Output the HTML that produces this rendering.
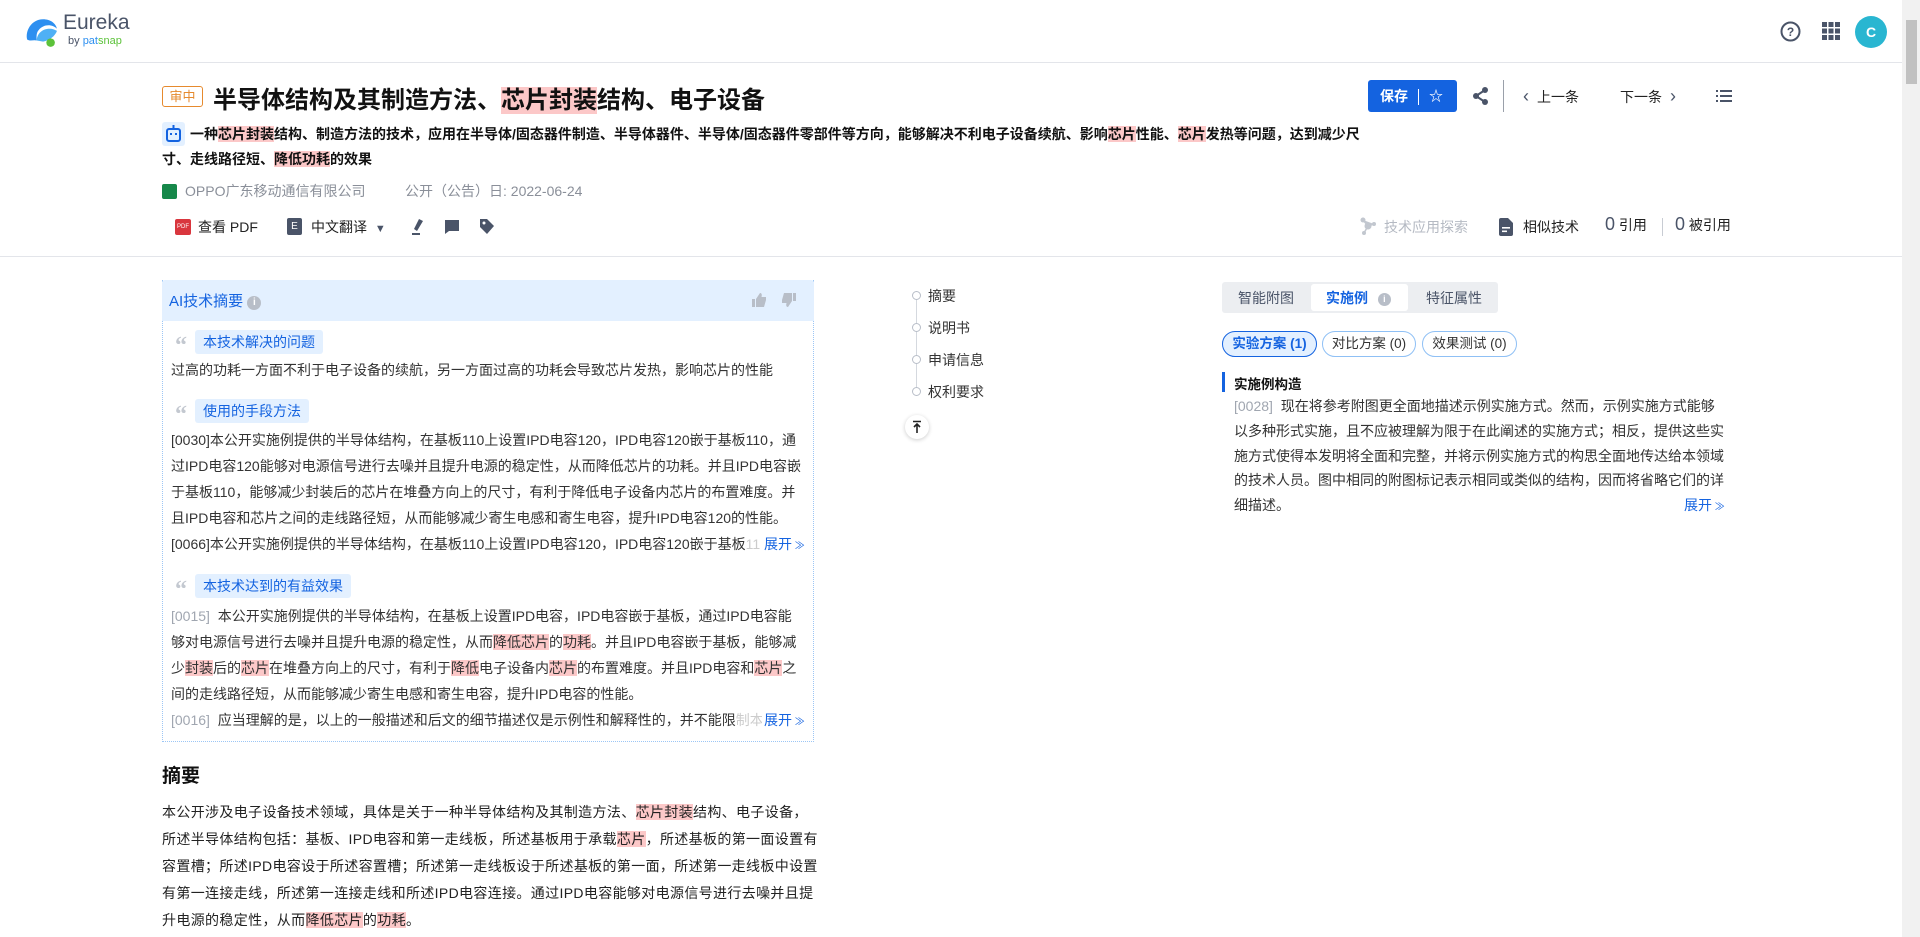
<!DOCTYPE html>
<html><head><meta charset="utf-8">
<style>
*{margin:0;padding:0;box-sizing:border-box}
body{width:1920px;height:937px;overflow:hidden;background:#fff;font-family:"Liberation Sans","Noto Sans CJK SC",sans-serif;color:#222;position:relative}
.a{position:absolute;white-space:nowrap}
.hl{background:#fcc8c8}
.hdr{position:absolute;left:0;top:0;width:1902px;height:63px;border-bottom:1px solid #e3e5ea}
.sb{position:absolute;right:0;top:0;width:18px;height:937px;background:#f1f1f1}
.sb div{position:absolute;left:4px;top:20px;width:11px;height:64px;background:#c1c1c1}
.gray{color:#8a8f99}
.ptxt{font-size:14px;line-height:26px;color:#333}
.tag{display:inline-block;background:#e3f0ff;color:#1463e0;font-size:14px;padding:2px 8px;border-radius:3px}
.q{display:inline-block;color:#c3c8d0;font-weight:bold;font-size:24px;line-height:14px;height:14px;vertical-align:-6px;margin-right:8px;font-family:"Liberation Serif",serif}
.num{color:#a0a6b0}
.more{color:#1463e0}
</style></head><body>
<div class="hdr"></div>
<div class="sb"><div></div></div>
<!-- logo -->
<svg class="a" style="left:23px;top:16px" width="36" height="32" viewBox="0 0 32 30"><path d="M3 22C1 14 7 3 18 3c7 0 12 4 13 9-5-5-13-4-17 1-3 3-2 8-2 10-3-1-6 1-9-1z" fill="#2d8ff0"/><path d="M12 23c0-6 5-11 12-11 3 0 5 1 7 2-2 5-7 9-13 10z" fill="#4fb0f5"/><circle cx="25" cy="25" r="4" fill="#5cc23a"/></svg>
<div class="a" style="left:63px;top:11px;font-size:21px;color:#4a5468">Eureka</div>
<div class="a" style="left:68px;top:35px;font-size:11px;color:#4a5468">by <span style="color:#2d8ff0">pat</span><span style="color:#5cc23a">snap</span></div>
<!-- header right -->
<svg class="a" style="left:1780px;top:21px" width="21" height="21" viewBox="0 0 21 21"><circle cx="10.5" cy="10.5" r="9" fill="none" stroke="#4a5468" stroke-width="2"/><text x="10.5" y="15" text-anchor="middle" font-size="12" font-weight="bold" fill="#4a5468" font-family="Liberation Sans">?</text></svg>
<svg class="a" style="left:1822px;top:22px" width="18" height="18" viewBox="0 0 18 18" fill="#4a5468"><rect x="0" y="0" width="5" height="5"/><rect x="6.5" y="0" width="5" height="5"/><rect x="13" y="0" width="5" height="5"/><rect x="0" y="6.5" width="5" height="5"/><rect x="6.5" y="6.5" width="5" height="5"/><rect x="13" y="6.5" width="5" height="5"/><rect x="0" y="13" width="5" height="5"/><rect x="6.5" y="13" width="5" height="5"/><rect x="13" y="13" width="5" height="5"/></svg>
<div class="a" style="left:1855px;top:16px;width:32px;height:32px;border-radius:50%;background:#29b6d1;color:#fff;font-size:14px;font-weight:bold;text-align:center;line-height:32px">C</div>

<!-- title -->
<div class="a" style="left:162px;top:86px;width:41px;height:21px;border:1px solid #e68a2e;border-radius:3px;color:#e68a2e;font-size:13px;text-align:center;line-height:19px">审中</div>
<div class="a" style="left:213px;top:80px;font-size:24px;font-weight:bold;color:#111">半导体结构及其制造方法、<span class="hl">芯片封装</span>结构、电子设备</div>
<div class="a" style="left:1368px;top:80px;width:89px;height:32px;background:#1463e0;border-radius:3px;color:#fff;font-size:14px;font-weight:bold;line-height:32px;padding-left:12px">保存<span style="display:inline-block;width:1px;height:16px;background:#fff;vertical-align:middle;margin:0 10px 0 10px"></span>☆</div>
<svg class="a" style="left:1473px;top:87px" width="16" height="18" viewBox="0 0 16 18" fill="#4a5468"><circle cx="12" cy="3" r="3"/><circle cx="3" cy="9" r="3"/><circle cx="12" cy="15" r="3"/><path d="M3 9L12 3M3 9l9 6" stroke="#4a5468" stroke-width="2"/></svg>
<div class="a" style="left:1503px;top:80px;width:1px;height:32px;background:#9aa0aa"></div>
<div class="a" style="left:1523px;top:86px;font-size:14px;color:#222"><span style="font-size:18px;color:#4a5468;margin-right:8px">‹</span>上一条</div>
<div class="a" style="left:1620px;top:86px;font-size:14px;color:#222">下一条<span style="font-size:18px;color:#4a5468;margin-left:8px">›</span></div>
<svg class="a" style="left:1716px;top:89px" width="16" height="14" viewBox="0 0 16 14" fill="#4a5468"><rect x="0" y="1" width="2" height="2"/><rect x="4" y="1" width="12" height="2"/><rect x="0" y="6" width="2" height="2"/><rect x="4" y="6" width="12" height="2"/><rect x="0" y="11" width="2" height="2"/><rect x="4" y="11" width="12" height="2"/></svg>

<!-- summary -->
<div class="a" style="left:162px;top:122px;width:23px;height:24px;background:#e3f0ff;border-radius:3px"></div>
<svg class="a" style="left:166px;top:125px" width="15" height="18" viewBox="0 0 15 18"><rect x="6.5" y="0" width="2" height="4" fill="#1463e0"/><rect x="1" y="4" width="13" height="12" rx="2" fill="none" stroke="#1463e0" stroke-width="2"/><rect x="4" y="8" width="2" height="2" fill="#1463e0"/><rect x="9" y="8" width="2" height="2" fill="#1463e0"/></svg>
<div class="a" style="left:162px;top:122px;font-size:14px;font-weight:bold;color:#111;line-height:25px"><span style="display:inline-block;width:28px"></span>一种<span class="hl">芯片封装</span>结构、制造方法的技术，应用在半导体/固态器件制造、半导体器件、半导体/固态器件零部件等方向，能够解决不利电子设备续航、影响<span class="hl">芯片</span>性能、<span class="hl">芯片</span>发热等问题，达到减少尺<br>寸、走线路径短、<span class="hl">降低功耗</span>的效果</div>

<div class="a" style="left:162px;top:184px;width:15px;height:15px;background:#16884a;border-radius:2px"></div>
<div class="a gray" style="left:185px;top:181px;font-size:14px">OPPO广东移动通信有限公司</div>
<div class="a gray" style="left:405px;top:181px;font-size:14px">公开（公告）日: 2022-06-24</div>

<!-- toolbar -->
<div class="a" style="left:175px;top:219px;width:16px;height:16px;background:#d9363e;border-radius:2px;color:#fff;font-size:6px;line-height:16px;text-align:center">PDF</div>
<div class="a" style="left:198px;top:217px;font-size:14px;color:#222">查看 PDF</div>
<div class="a" style="left:287px;top:218px;width:15px;height:17px;background:#4a5468;border-radius:2px;color:#fff;font-size:10px;text-align:center;line-height:17px">E</div>
<div class="a" style="left:311px;top:217px;font-size:14px;color:#222">中文翻译 <span style="font-size:11px;color:#4a5468;margin-left:4px">▼</span></div>
<svg class="a" style="left:411px;top:218px" width="14" height="18" viewBox="0 0 14 18" fill="#4a5468"><path d="M8 1l4 2-6 10-3-2z"/><rect x="1" y="15" width="8" height="2"/></svg>
<svg class="a" style="left:444px;top:219px" width="16" height="16" viewBox="0 0 16 16" fill="#4a5468"><path d="M1 1h14v11H5l-4 3z"/></svg>
<svg class="a" style="left:479px;top:218px" width="16" height="17" viewBox="0 0 16 17" fill="#4a5468"><path d="M1 1h7l7 7-7 8-7-7z"/><circle cx="5" cy="5" r="1.5" fill="#fff"/></svg>

<svg class="a" style="left:1359px;top:217px" width="18" height="18" viewBox="0 0 18 18" fill="#c2c7cf"><circle cx="4" cy="3" r="2.5"/><circle cx="9" cy="9" r="3.5"/><circle cx="15" cy="7" r="2"/><circle cx="5" cy="16" r="2"/><path d="M4 3l5 6 6-2M9 9l-4 7" stroke="#c2c7cf" stroke-width="1.5"/></svg>
<div class="a" style="left:1384px;top:217px;font-size:14px;color:#b5bac3">技术应用探索</div>
<svg class="a" style="left:1499px;top:218px" width="14" height="18" viewBox="0 0 14 18" fill="#4a5468"><path d="M0 2a2 2 0 012-2h7l5 5v11a2 2 0 01-2 2H2a2 2 0 01-2-2z"/><rect x="3" y="9" width="8" height="1.6" fill="#fff"/><rect x="3" y="12.5" width="5" height="1.6" fill="#fff"/></svg>
<div class="a" style="left:1523px;top:217px;font-size:14px;color:#222">相似技术</div>
<div class="a" style="left:1605px;top:214px;font-size:14px;color:#222"><span style="font-size:18px;color:#4a5468">0</span> 引用</div>
<div class="a" style="left:1662px;top:218px;width:1px;height:18px;background:#c8ccd3"></div>
<div class="a" style="left:1675px;top:214px;font-size:14px;color:#222"><span style="font-size:18px;color:#4a5468">0</span> 被引用</div>
<div class="a" style="left:0;top:256px;width:1902px;height:1px;background:#e3e5ea"></div>

<!-- AI box -->
<div class="a" style="left:162px;top:280px;width:652px;height:462px;border:1px dotted #9cc6f5;border-top:none"></div>
<div class="a" style="left:162px;top:280px;width:652px;height:41px;background:#e3f0ff;border-radius:3px 3px 0 0"></div>
<div class="a" style="left:169px;top:290px;font-size:15px;color:#1463e0">AI技术摘要 <span style="display:inline-block;width:14px;height:14px;border-radius:50%;background:#b8bec8;color:#fff;font-size:10px;text-align:center;line-height:14px;vertical-align:1px;font-weight:bold">i</span></div>
<svg class="a" style="left:751px;top:292px" width="16" height="16" viewBox="0 0 16 16" fill="#b8bec8"><path d="M1 7h3v8H1zM5 7l4-6c2 0 2 2 1.5 4H15v3l-2 7H5z"/></svg>
<svg class="a" style="left:781px;top:292px" width="16" height="16" viewBox="0 0 16 16" fill="#b8bec8"><path d="M15 9h-3V1h3zM11 9l-4 6c-2 0-2-2-1.5-4H1V8l2-7h8z"/></svg>

<div class="a" style="left:175px;top:330px"><span class="q">“</span><span class="tag">本技术解决的问题</span></div>
<div class="a ptxt" style="left:171px;top:357px">过高的功耗一方面不利于电子设备的续航，另一方面过高的功耗会导致芯片发热，影响芯片的性能</div>
<div class="a" style="left:175px;top:399px"><span class="q">“</span><span class="tag">使用的手段方法</span></div>
<div class="a ptxt" style="left:171px;top:427px">[0030]本公开实施例提供的半导体结构，在基板110上设置IPD电容120，IPD电容120嵌于基板110，通<br>过IPD电容120能够对电源信号进行去噪并且提升电源的稳定性，从而降低芯片的功耗。并且IPD电容嵌<br>于基板110，能够减少封装后的芯片在堆叠方向上的尺寸，有利于降低电子设备内芯片的布置难度。并<br>且IPD电容和芯片之间的走线路径短，从而能够减少寄生电感和寄生电容，提升IPD电容120的性能。<br>[0066]本公开实施例提供的半导体结构，在基板110上设置IPD电容120，IPD电容120嵌于基板<span style="color:#ccc">11</span></div>
<div class="a ptxt more" style="left:762px;top:531px;background:#fff;padding-left:2px">展开<span style="font-size:10px"> ≫</span></div>
<div class="a" style="left:175px;top:574px"><span class="q">“</span><span class="tag">本技术达到的有益效果</span></div>
<div class="a ptxt" style="left:171px;top:603px"><span class="num">[0015]</span> &nbsp;本公开实施例提供的半导体结构，在基板上设置IPD电容，IPD电容嵌于基板，通过IPD电容能<br>够对电源信号进行去噪并且提升电源的稳定性，从而<span class="hl">降低芯片</span>的<span class="hl">功耗</span>。并且IPD电容嵌于基板，能够减<br>少<span class="hl">封装</span>后的<span class="hl">芯片</span>在堆叠方向上的尺寸，有利于<span class="hl">降低</span>电子设备内<span class="hl">芯片</span>的布置难度。并且IPD电容和<span class="hl">芯片</span>之<br>间的走线路径短，从而能够减少寄生电感和寄生电容，提升IPD电容的性能。<br><span class="num">[0016]</span> &nbsp;应当理解的是，以上的一般描述和后文的细节描述仅是示例性和解释性的，并不能限<span style="color:#ccc">制本</span></div>
<div class="a ptxt more" style="left:762px;top:707px;background:#fff;padding-left:2px">展开<span style="font-size:10px"> ≫</span></div>

<!-- abstract -->
<div class="a" style="left:162px;top:761px;font-size:19px;font-weight:bold;color:#111">摘要</div>
<div class="a" style="left:162px;top:799px;font-size:14px;line-height:27px;color:#222;letter-spacing:0.35px">本公开涉及电子设备技术领域，具体是关于一种半导体结构及其制造方法、<span class="hl">芯片封装</span>结构、电子设备，<br>所述半导体结构包括：基板、IPD电容和第一走线板，所述基板用于承载<span class="hl">芯片</span>，所述基板的第一面设置有<br>容置槽；所述IPD电容设于所述容置槽；所述第一走线板设于所述基板的第一面，所述第一走线板中设置<br>有第一连接走线，所述第一连接走线和所述IPD电容连接。通过IPD电容能够对电源信号进行去噪并且提<br>升电源的稳定性，从而<span class="hl">降低芯片</span>的<span class="hl">功耗</span>。</div>

<!-- middle nav -->
<div class="a" style="left:916px;top:296px;width:1px;height:96px;background:#d5d9df"></div>
<div class="a" style="left:912px;top:291px;width:9px;height:9px;border:1px solid #b8bec8;border-radius:50%;background:#fff"></div>
<div class="a" style="left:912px;top:323px;width:9px;height:9px;border:1px solid #b8bec8;border-radius:50%;background:#fff"></div>
<div class="a" style="left:912px;top:355px;width:9px;height:9px;border:1px solid #b8bec8;border-radius:50%;background:#fff"></div>
<div class="a" style="left:912px;top:387px;width:9px;height:9px;border:1px solid #b8bec8;border-radius:50%;background:#fff"></div>
<div class="a" style="left:928px;top:280px;font-size:14px;line-height:32px;color:#333">摘要<br>说明书<br>申请信息<br>权利要求</div>
<div class="a" style="left:905px;top:415px;width:24px;height:24px;border-radius:50%;background:#fff;box-shadow:0 1px 4px rgba(0,0,0,.2)"></div>
<svg class="a" style="left:911px;top:420px" width="12" height="14" viewBox="0 0 12 14" fill="none" stroke="#222" stroke-width="1.6"><path d="M2 1.5h8M6 13V4M3 7l3-3 3 3"/></svg>

<!-- right tabs -->
<div class="a" style="left:1222px;top:282px;width:276px;height:31px;background:#eceef1;border-radius:3px"></div>
<div class="a" style="left:1311px;top:284px;width:97px;height:27px;background:#fff;border-radius:3px"></div>
<div class="a" style="left:1238px;top:288px;font-size:14px;color:#4a5468">智能附图</div>
<div class="a" style="left:1326px;top:288px;font-size:14px;color:#1463e0;font-weight:bold">实施例 <span style="display:inline-block;width:13px;height:13px;border-radius:50%;background:#b8bec8;color:#fff;font-size:9px;text-align:center;line-height:13px;margin-left:6px;vertical-align:1px">i</span></div>
<div class="a" style="left:1426px;top:288px;font-size:14px;color:#4a5468">特征属性</div>
<div class="a" style="left:1222px;top:331px;width:95px;height:26px;border:1.5px solid #1463e0;border-radius:13px;background:#e3f0ff;color:#1463e0;font-weight:bold;font-size:13.5px;text-align:center;line-height:23px">实验方案 (1)</div>
<div class="a" style="left:1322px;top:331px;width:94px;height:26px;border:1px solid #8fc0f5;border-radius:13px;color:#333;font-size:13.5px;text-align:center;line-height:24px">对比方案 (0)</div>
<div class="a" style="left:1422px;top:331px;width:95px;height:26px;border:1px solid #8fc0f5;border-radius:13px;color:#333;font-size:13.5px;text-align:center;line-height:24px">效果测试 (0)</div>
<div class="a" style="left:1222px;top:372px;width:3px;height:20px;background:#1463e0"></div>
<div class="a" style="left:1234px;top:373px;font-size:13.5px;font-weight:bold;color:#111">实施例构造</div>
<div class="a" style="left:1234px;top:394px;font-size:14px;line-height:24.8px;color:#333"><span class="num">[0028]</span> &nbsp;现在将参考附图更全面地描述示例实施方式。然而，示例实施方式能够<br>以多种形式实施，且不应被理解为限于在此阐述的实施方式；相反，提供这些实<br>施方式使得本发明将全面和完整，并将示例实施方式的构思全面地传达给本领域<br>的技术人员。图中相同的附图标记表示相同或类似的结构，因而将省略它们的详<br>细描述。</div>
<div class="a more" style="left:1684px;top:495px;font-size:14px">展开<span style="font-size:10px"> ≫</span></div>
</body></html>
